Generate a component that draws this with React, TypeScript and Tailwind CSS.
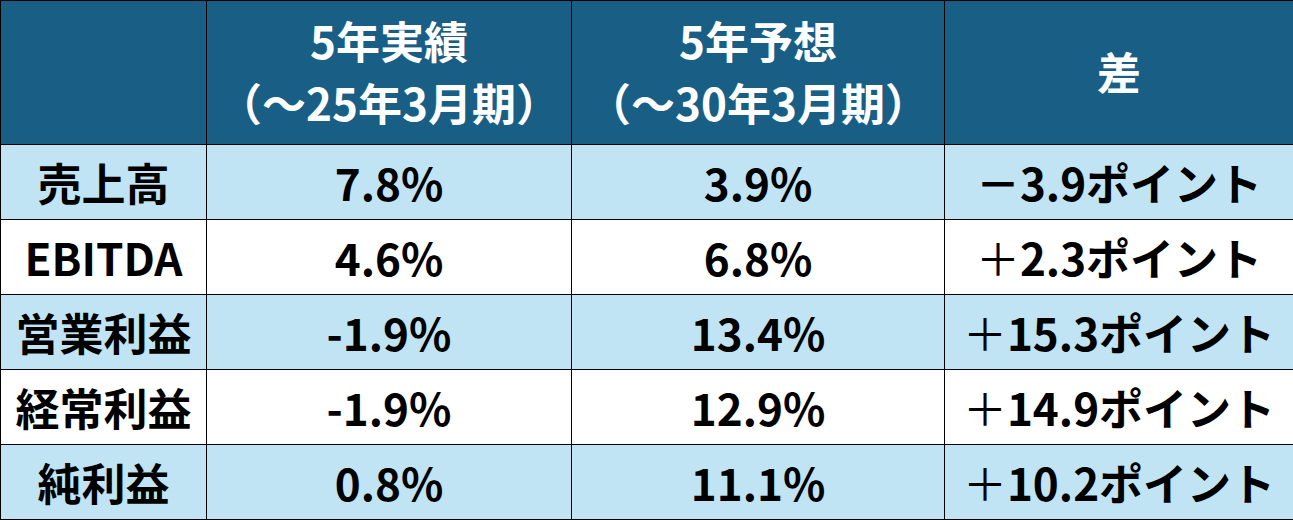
const rows = [
  { label: '売上高', actual: '7.8%', forecast: '3.9%', sign: '－', diff: '3.9ポイント', light: true },
  { label: 'EBITDA', actual: '4.6%', forecast: '6.8%', sign: '＋', diff: '2.3ポイント', light: false },
  { label: '営業利益', actual: '-1.9%', forecast: '13.4%', sign: '＋', diff: '15.3ポイント', light: true },
  { label: '経常利益', actual: '-1.9%', forecast: '12.9%', sign: '＋', diff: '14.9ポイント', light: false },
  { label: '純利益', actual: '0.8%', forecast: '11.1%', sign: '＋', diff: '10.2ポイント', light: true },
]

export default function App() {
  return (
    <div
      className="w-[1293px] h-[520px] overflow-hidden bg-white"
      style={{ fontFamily: '"Noto Sans CJK JP", "Noto Sans", sans-serif' }}
    >
      <div className="grid grid-cols-[205px_364px_372px_1fr] grid-rows-[143px_repeat(5,74px)] gap-px bg-black pt-px pl-px pb-px text-[44px] font-bold leading-none">
        {/* header */}
        <div className="bg-[#185e85]" />
        <div className="bg-[#185e85] text-white flex flex-col items-center justify-center gap-[18px] pb-[4px]">
          <span>5年実績</span>
          <span>（～25年3月期）</span>
        </div>
        <div className="bg-[#185e85] text-white flex flex-col items-center justify-center gap-[18px] pb-[4px]">
          <span>5年予想</span>
          <span>（～30年3月期）</span>
        </div>
        <div className="bg-[#185e85] text-white flex items-center justify-center pb-[4px]">
          <span>差</span>
        </div>

        {rows.map((r) => {
          const bg = r.light ? 'bg-[#c1e4f4]' : 'bg-white'
          return [
            <div key={r.label + 'a'} className={`${bg} flex items-center justify-center text-black`}>
              {r.label}
            </div>,
            <div key={r.label + 'b'} className={`${bg} flex items-center justify-center text-black`}>
              {r.actual}
            </div>,
            <div key={r.label + 'c'} className={`${bg} flex items-center justify-center text-black`}>
              {r.forecast}
            </div>,
            <div key={r.label + 'd'} className={`${bg} flex items-center justify-center text-black`}>
              <span className={r.sign === '＋' ? 'font-normal' : ''}>{r.sign}</span>
              {r.diff}
            </div>,
          ]
        })}
      </div>
    </div>
  )
}
